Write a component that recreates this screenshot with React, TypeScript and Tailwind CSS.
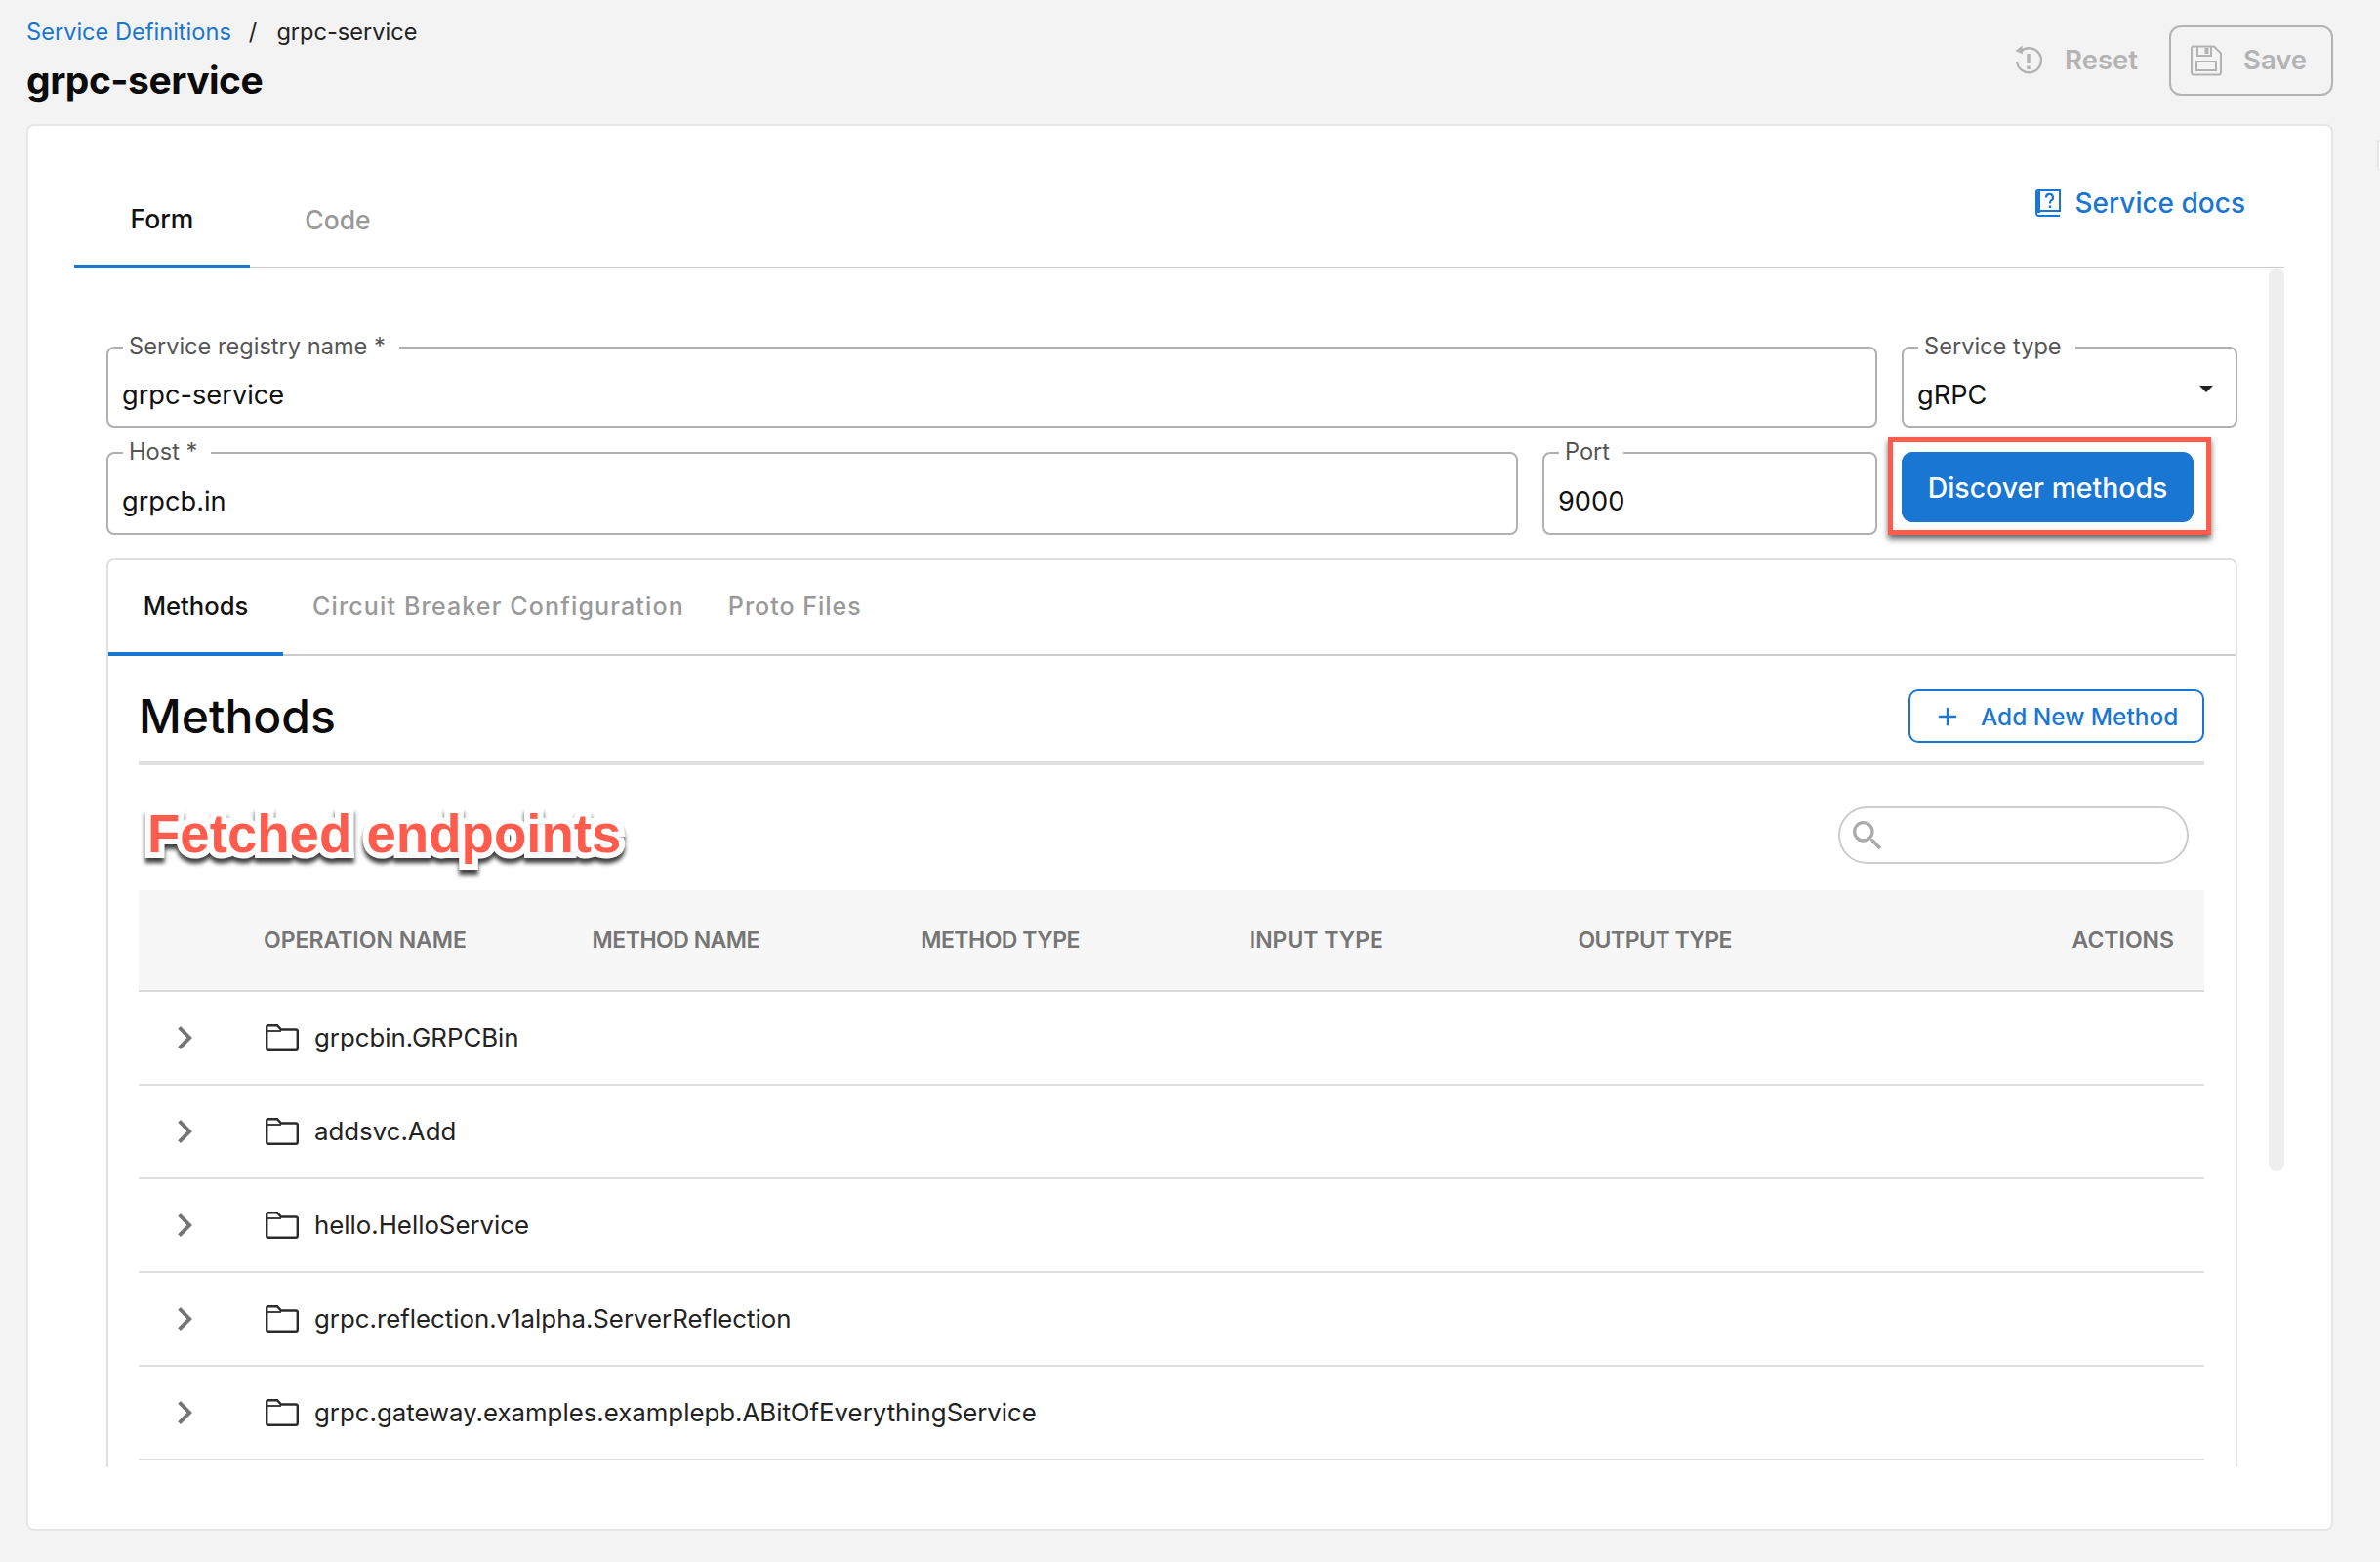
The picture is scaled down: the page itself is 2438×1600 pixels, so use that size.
import { Plus } from 'lucide-react'
import { MdChevronRight, MdSearch } from 'react-icons/md'

const rows = [
  'grpcbin.GRPCBin',
  'addsvc.Add',
  'hello.HelloService',
  'grpc.reflection.v1alpha.ServerReflection',
  'grpc.gateway.examples.examplepb.ABitOfEverythingService',
]

function ResetIcon() {
  return (
    <svg viewBox="0 0 28 32" className="w-[28px] h-[32px] text-[#b3b3b3]" fill="none" stroke="currentColor" strokeWidth="2.4">
      <path d="M6 6.5 A12.5 12.5 0 1 1 2 17" />
      <path d="M7.5 0.5 L0.5 6 L8 9.5" fill="currentColor" stroke="none" />
      <path d="M14 9 V19" strokeWidth="3.4" />
      <path d="M14 21.5 V25" strokeWidth="3.4" />
    </svg>
  )
}

function SaveIcon() {
  return (
    <svg viewBox="0 0 32 32" className="w-[32px] h-[32px] text-[#b3b3b3]" fill="none" stroke="currentColor" strokeWidth="2">
      <path d="M2.5 1.5 H24 L31 8.5 V28.5 A2 2 0 0 1 29 30.5 H3 A2 2 0 0 1 1 28.5 V3 A1.5 1.5 0 0 1 2.5 1.5 Z" />
      <path d="M7 1.5 V11 H21 V1.5" />
      <path d="M14.5 3 H18.5 V9 H14.5 Z" fill="currentColor" stroke="none" />
      <rect x="6" y="17" width="20" height="9" />
    </svg>
  )
}

function DocsIcon() {
  return (
    <svg viewBox="0 0 26 28" className="w-[26px] h-[28px] text-[#1976d2]" fill="none" stroke="currentColor" strokeWidth="2">
      <path d="M1 23 V3 A2 2 0 0 1 3 1 H25 V22 H3.5 A2.5 2.5 0 0 0 1 24.5 A2.5 2.5 0 0 0 3.5 27 H25" />
      <path d="M1 3 V24 H5 V1 Z" fill="currentColor" stroke="none" />
      <path d="M11 8.5 A3.5 3.5 0 1 1 16 11.5 C15 12.3 15 13 15 14.5" strokeWidth="2.2" />
      <path d="M15 16.5 V19" strokeWidth="2.4" />
    </svg>
  )
}

function FolderIcon() {
  return (
    <svg viewBox="0 0 34 28" className="w-[34px] h-[28px] text-[#2b2b2b]" fill="none" stroke="currentColor" strokeWidth="2.4">
      <path d="M1.2 25 V3 A1.8 1.8 0 0 1 3 1.2 H12 L16 5.5 H31 A1.8 1.8 0 0 1 32.8 7.3 V25 A1.8 1.8 0 0 1 31 26.8 H3 A1.8 1.8 0 0 1 1.2 25 Z" />
      <path d="M1.2 7 H16" strokeWidth="1.8" />
    </svg>
  )
}

function Field({ label, value, className, select }: { label: string; value: string; className: string; select?: boolean }) {
  return (
    <div className={`relative border-2 border-[#b0b0b0] rounded-[8px] bg-white flex items-center pl-[14px] pr-[23px] pt-[17px] text-[27.2px] text-[#111] ${className}`}>
      <span className="absolute -top-[16px] left-[15px] bg-white pl-[6px] pr-[14px] text-[23.6px] leading-[28px] text-[#555]">{label}</span>
      <span className="flex-1">{value}</span>
      {select && <span className="w-0 h-0 mb-[13px] border-x-[7px] border-x-transparent border-t-[7px] border-t-[#222]" />}
    </div>
  )
}

export default function App() {
  return (
    <div className="relative w-[2438px] h-[1600px] overflow-hidden bg-[#f3f3f3] font-['Inter',sans-serif]">
      <div className="absolute left-[2435px] top-[143px] w-[10px] h-[32px] bg-white border-2 border-[#e6e6e6] rounded-[3px]" />

      <header className="h-[127px] pl-[27px] pr-[48px] flex justify-between">
        <div>
          <div className="pt-[17px] flex items-center text-[23.6px] leading-[32px] text-[#222]">
            <span className="text-[#1976d2]">Service Definitions</span>
            <span className="ml-[18px] mr-[20px]">/</span>
            <span>grpc-service</span>
          </div>
          <h1 className="mt-[9px] text-[39px] leading-[48px] font-bold text-[#0b0b0b] tracking-[-0.5px]">grpc-service</h1>
        </div>
        <div className="pt-[26px] flex items-start text-[27.5px] font-semibold text-[#b3b3b3]">
          <div className="h-[72px] flex items-center gap-[23px]">
            <ResetIcon />
            <span>Reset</span>
          </div>
          <div className="ml-[32px] w-[168px] h-[72px] border-2 border-[#b3b3b3] rounded-[12px] flex items-center pl-[20px] gap-[22px]">
            <SaveIcon />
            <span>Save</span>
          </div>
        </div>
      </header>

      <main className="ml-[27px] w-[2363px] h-[1441px] bg-white border-2 border-[#e6e6e6] rounded-[8px] pl-[47px] pr-[48px]">
        <div className="h-[146px] border-b-2 border-[#cccccc] flex justify-between">
          <div className="flex items-end">
            <div className="relative -mb-[2px] w-[180px] h-[96px] border-b-[4px] border-[#1976d2] flex items-center justify-center text-[26.5px] font-medium text-[#111]">Form</div>
            <div className="w-[180px] h-[94px] flex items-center justify-center text-[26.5px] font-medium text-[#999]">Code</div>
          </div>
          <div className="mt-[59px] mr-[40px] h-[40px] flex items-center gap-[15px] text-[#1976d2] text-[28px] font-medium">
            <DocsIcon />
            <span>Service docs</span>
          </div>
        </div>

        <div className="h-[1228px] overflow-hidden flex">
          <div className="w-[2248px] pl-[33px] pr-[32px] pt-[80px]">
            <div className="flex gap-[25px] h-[83px]">
              <Field label="Service registry name *" value="grpc-service" className="flex-1" />
              <Field label="Service type" value="gRPC" className="w-[344px]" select />
            </div>
            <div className="mt-[25px] flex gap-[25px] h-[85px]">
              <Field label="Host *" value="grpcb.in" className="w-[1446px]" />
              <Field label="Port" value="9000" className="w-[343px]" />
              <div className="relative w-[344px]">
                <div className="absolute -left-[14px] -top-[15px] w-[331px] h-[100px] border-[5px] border-[#ff5c4d] shadow-[0_4px_6px_rgba(0,0,0,0.6)] flex items-center pl-[9px] pt-[2px]">
                  <button className="w-[299px] h-[72px] pt-[2px] rounded-[11px] bg-[#1976d2] text-white text-[28.4px] font-medium">Discover methods</button>
                </div>
              </div>
            </div>

            <section className="mt-[24px] h-[1000px] border-x-2 border-t-2 border-[#e0e0e0] rounded-t-[8px]">
              <div className="h-[98px] border-b-2 border-[#cccccc] flex items-end">
                <div className="relative -mb-[2px] w-[179px] h-[98px] border-b-[4px] border-[#1976d2] flex items-center justify-center text-[25.6px] font-medium text-[#111]">Methods</div>
                <span className="ml-[30px] h-[96px] flex items-center text-[25px] tracking-[1.15px] font-medium text-[#999]">Circuit Breaker Configuration</span>
                <span className="ml-[45px] h-[96px] flex items-center text-[25px] tracking-[1px] font-medium text-[#999]">Proto Files</span>
              </div>

              <div className="pl-[31px] pr-[32px]">
                <div className="pt-[34px] pb-[19px] border-b-4 border-[#e0e0e0] flex justify-between items-start">
                  <h2 className="h-[55px] flex items-center text-[48px] font-medium text-[#0b0b0b]">Methods</h2>
                  <button className="w-[303px] h-[55px] pt-[1px] border-2 border-[#1976d2] rounded-[10px] flex items-center pl-[24px] gap-[20px] text-[24.4px] font-medium text-[#1976d2]">
                    <Plus className="w-[28px] h-[28px]" strokeWidth={2} />
                    <span>Add New Method</span>
                  </button>
                </div>

                <div className="mt-[42px] pl-[9px] pr-[16px] flex justify-between items-center">
                  <span className="-mt-[2px] font-['Liberation_Sans',sans-serif] font-bold text-[54.6px] leading-[59px] text-[#ff5c4d] [-webkit-text-stroke:12px_white] [paint-order:stroke_fill] drop-shadow-[0_5px_2px_rgba(0,0,0,0.75)]">Fetched endpoints</span>
                  <div className="w-[359px] h-[59px] border-2 border-[#cccccc] rounded-full flex items-center pl-[8px]">
                    <MdSearch className="w-[40px] h-[40px] text-[#aaaaaa]" />
                  </div>
                </div>

                <div className="mt-[27px] h-[104px] bg-[#f7f7f7] border-b-2 border-[#d9d9d9] grid grid-cols-[128px_336.6px_336.6px_336.6px_336.6px_1fr] items-center text-[23px] font-semibold text-[#757575]">
                  <span />
                  <span>OPERATION NAME</span>
                  <span className="tracking-[-0.5px]">METHOD NAME</span>
                  <span className="tracking-[-0.5px]">METHOD TYPE</span>
                  <span>INPUT TYPE</span>
                  <div className="flex justify-between pr-[31px]">
                    <span className="tracking-[-0.5px]">OUTPUT TYPE</span>
                    <span>ACTIONS</span>
                  </div>
                </div>

                {rows.map((name) => (
                  <div key={name} className="h-[96px] border-b-2 border-[#e0e0e0] flex items-center text-[#222] text-[25.8px]">
                    <MdChevronRight className="ml-[23px] w-[48px] h-[48px] text-[#757575]" />
                    <div className="ml-[59px]">
                      <FolderIcon />
                    </div>
                    <span className="ml-[16px]">{name}</span>
                  </div>
                ))}
              </div>
            </section>
          </div>
          <div className="w-[16px] h-[924px] bg-[#eeeeee] rounded-[8px]" />
        </div>
      </main>
    </div>
  )
}
